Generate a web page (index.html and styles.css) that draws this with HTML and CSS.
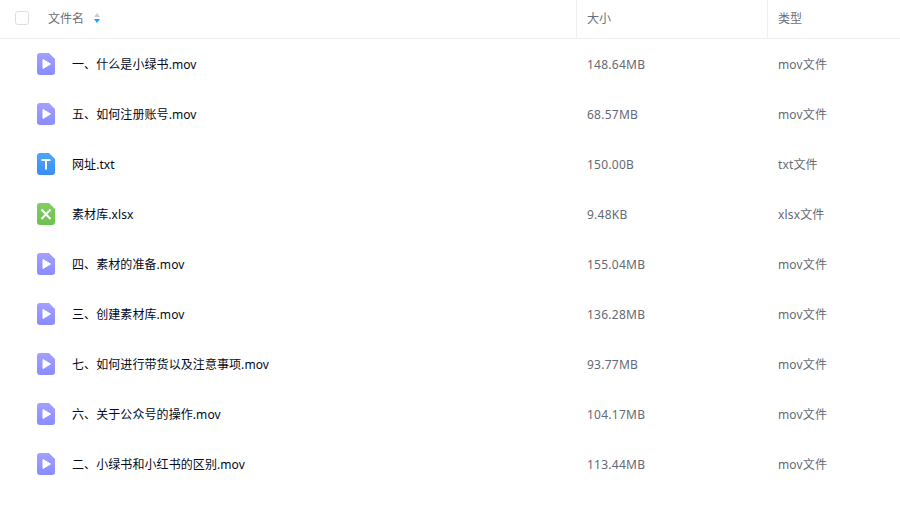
FILE: index.html
```html
<!DOCTYPE html>
<html lang="zh">
<head>
<meta charset="utf-8">
<title>文件列表</title>
<link rel="stylesheet" href="styles.css">
</head>
<body>
<svg class="defs" width="0" height="0">
  <defs>
    <linearGradient id="gv" x1="0" y1="0" x2="0" y2="1"><stop offset="0" stop-color="#a3a0ff"/><stop offset="1" stop-color="#8a8cff"/></linearGradient>
    <linearGradient id="gt" x1="0" y1="0" x2="0" y2="1"><stop offset="0" stop-color="#4ba6fa"/><stop offset="1" stop-color="#3b8cf5"/></linearGradient>
    <linearGradient id="gx" x1="0" y1="0" x2="0" y2="1"><stop offset="0" stop-color="#80cf62"/><stop offset="1" stop-color="#6cc24e"/></linearGradient>
    <symbol id="video" viewBox="0 0 18 22"><path d="M3 0H12L18 6V19a3 3 0 0 1-3 3H3a3 3 0 0 1-3-3V3a3 3 0 0 1 3-3z" fill="url(#gv)"/><path d="M6 6.5 13.5 11 6 15.5z" fill="#fff" stroke="#fff" stroke-width="1" stroke-linejoin="round"/></symbol>
    <symbol id="text" viewBox="0 0 18 22"><path d="M3 0H12L18 6V19a3 3 0 0 1-3 3H3a3 3 0 0 1-3-3V3a3 3 0 0 1 3-3z" fill="url(#gt)"/><path d="M4.5 7H13.5M9 7V16.5" stroke="#fff" stroke-width="2" fill="none"/></symbol>
    <symbol id="excel" viewBox="0 0 18 22"><path d="M3 0H12L18 6V19a3 3 0 0 1-3 3H3a3 3 0 0 1-3-3V3a3 3 0 0 1 3-3z" fill="url(#gx)"/><path d="M4.5 6.5 13.5 16M13.5 6.5 4.5 16" stroke="#fff" stroke-width="2" fill="none"/></symbol>
  </defs>
</svg>
<main class="list">
  <header class="row head">
    <div class="c-name"><span class="check"></span><span class="head-name">文件名</span>
      <svg class="sort" width="8" height="12" viewBox="0 0 8 12"><path d="M4 1 7 5H1z" fill="#c9ced8"/><path d="M4 11 7 7H1z" fill="#06a7ff"/></svg>
    </div>
    <div class="c-size">大小</div>
    <div class="c-type">类型</div>
  </header>
  <div class="row item"><div class="c-name"><svg class="icon"><use href="#video"/></svg><span>一、什么是小绿书.mov</span></div><div class="c-size">148.64MB</div><div class="c-type">mov文件</div></div>
  <div class="row item"><div class="c-name"><svg class="icon"><use href="#video"/></svg><span>五、如何注册账号.mov</span></div><div class="c-size">68.57MB</div><div class="c-type">mov文件</div></div>
  <div class="row item"><div class="c-name"><svg class="icon"><use href="#text"/></svg><span>网址.txt</span></div><div class="c-size">150.00B</div><div class="c-type">txt文件</div></div>
  <div class="row item"><div class="c-name"><svg class="icon"><use href="#excel"/></svg><span>素材库.xlsx</span></div><div class="c-size">9.48KB</div><div class="c-type">xlsx文件</div></div>
  <div class="row item"><div class="c-name"><svg class="icon"><use href="#video"/></svg><span>四、素材的准备.mov</span></div><div class="c-size">155.04MB</div><div class="c-type">mov文件</div></div>
  <div class="row item"><div class="c-name"><svg class="icon"><use href="#video"/></svg><span>三、创建素材库.mov</span></div><div class="c-size">136.28MB</div><div class="c-type">mov文件</div></div>
  <div class="row item"><div class="c-name"><svg class="icon"><use href="#video"/></svg><span>七、如何进行带货以及注意事项.mov</span></div><div class="c-size">93.77MB</div><div class="c-type">mov文件</div></div>
  <div class="row item"><div class="c-name"><svg class="icon"><use href="#video"/></svg><span>六、关于公众号的操作.mov</span></div><div class="c-size">104.17MB</div><div class="c-type">mov文件</div></div>
  <div class="row item"><div class="c-name"><svg class="icon"><use href="#video"/></svg><span>二、小绿书和小红书的区别.mov</span></div><div class="c-size">113.44MB</div><div class="c-type">mov文件</div></div>
</main>
</body>
</html>
```

FILE: styles.css
```css
html, body { margin: 0; padding: 0; background: #fff; }
body { width: 900px; height: 522px; overflow: hidden; font-family: "Noto Sans", "Noto Sans CJK SC", sans-serif; font-size: 12px; line-height: 16px; }
.defs { position: absolute; }
.row { display: grid; grid-template-columns: 576px 191px 133px; }
.head { height: 39px; box-sizing: border-box; border-bottom: 1px solid #f0f0f2; color: #6b6f78; }
.head > div { display: flex; align-items: center; height: 38px; }
.head .c-size, .head .c-type { border-left: 1px solid #f0f0f2; box-sizing: border-box; }
.check { width: 12px; height: 12px; border: 1px solid #dcdfe5; border-radius: 3px; margin: 0 1px 2px 15px; }
.head-name { margin-left: 18px; }
.sort { margin: 0 0 2px 9px; }
.item { height: 50px; align-items: center; color: #666a72; }
.item .c-name { display: flex; align-items: center; color: #03081a; }
.item .c-name span { padding-top: 2px; letter-spacing: 0.08px; }
.icon { width: 18px; height: 22px; margin-left: 37px; margin-right: 17px; }
.c-size, .c-type { padding-left: 10px; box-sizing: border-box; }
.item .c-size { padding: 2px 0 0 11px; letter-spacing: 0.25px; }
.item .c-type { padding: 2px 0 0 11px; letter-spacing: 0.15px; }
```
